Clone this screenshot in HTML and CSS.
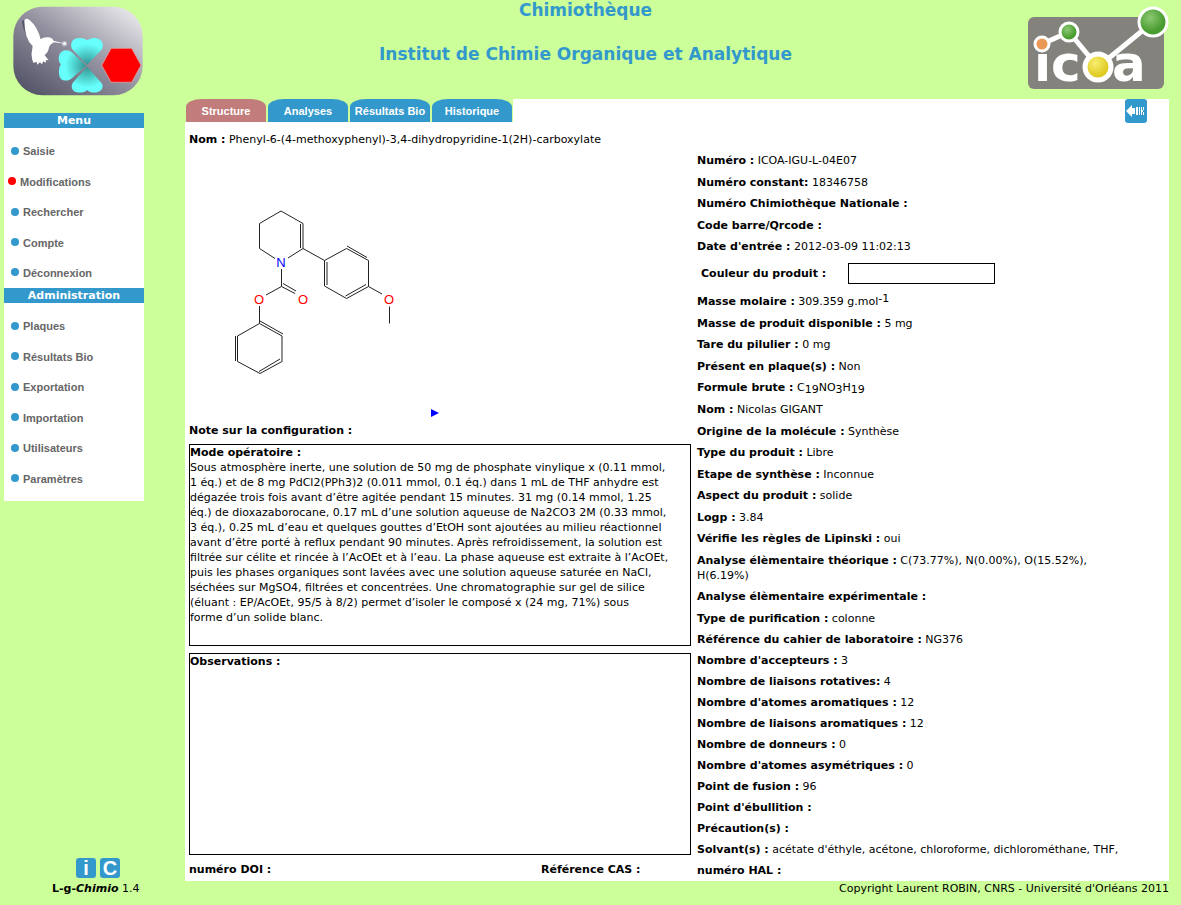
FILE: index.html
```html
<!DOCTYPE html>
<html lang="fr">
<head>
<meta charset="utf-8">
<title>Chimiothèque</title>
<link rel="stylesheet" href="styles.css">
</head>
<body>
<header class="header">
  <svg class="logo-app" viewBox="39 20 391 268" role="img" aria-label="L-g-Chimio">
    <defs>
      <linearGradient id="plate" x1="0" y1="1" x2="1" y2="0"><stop offset="0.1" stop-color="#58586c"/><stop offset="0.5" stop-color="#92909e"/><stop offset="1" stop-color="#f4f4f6"/></linearGradient>
      <radialGradient id="leaf" gradientUnits="userSpaceOnUse" cx="262" cy="198" r="66"><stop offset="0" stop-color="#2f8f8d"/><stop offset="1" stop-color="#66fffb"/></radialGradient>
    </defs>
    <rect x="40" y="21" width="389" height="266" rx="88" fill="url(#plate)"/>
    <path fill="#55556a" d="M66 66q4-10 12-4l30 56-4 12q-34-24-38-64z"/>
    <path fill="#fff" d="M73 62Q76 53 88 60Q114 82 122 119Q132 111 145 113Q157 114 161 123L196 132L162 128Q150 134 147 144Q145 158 134 166L146 182L138 181L138 189L130 185L126 194L120 188L112 195L110 186L101 190L97 181Q92 164 97 147L98 139Q74 118 73 62z"/>
    <circle cx="194" cy="132" r="8" fill="#fff" opacity=".4"/><circle cx="194" cy="132" r="4" fill="#fff"/>
    <g fill="url(#leaf)">
      <path d="M262 195L220 152C208 138 214 116 236 115C248 114 258 118 262 122C268 117 280 113 290 116C310 120 314 140 304 152z"/>
      <path d="M262 201L220 248C210 262 218 278 236 279C248 280 258 276 262 271C268 278 282 281 292 278C310 274 313 258 303 248z"/>
      <path d="M259 198L216 158C204 148 186 150 180 162C174 174 176 186 183 194C175 206 175 230 184 239C194 246 208 243 216 236z"/>
    </g>
    <path fill="#f00" stroke="#dcb5b5" stroke-width="2" d="M334 146h62l28 51-28 51h-62l-28-51z"/>
  </svg>
  <div class="titles"><h1>Chimiothèque</h1><h1>Institut de Chimie Organique et Analytique</h1></div>
  <svg class="logo-lab" viewBox="1027 5 142 85" role="img" aria-label="ICOA">
    <defs>
      <radialGradient id="green" cx=".4" cy=".35"><stop offset="0" stop-color="#8cc873"/><stop offset="1" stop-color="#489c30"/></radialGradient>
      <radialGradient id="yellow" cx=".4" cy=".35"><stop offset="0" stop-color="#f8ee70"/><stop offset="1" stop-color="#dfca20"/></radialGradient>
    </defs>
    <rect x="1028" y="17" width="136" height="72" rx="6" fill="#84827d"/>
    <text class="lab-name" x="1034 1051" y="81">ic</text>
    <text class="lab-name" x="1112" y="81">a</text>
    <path d="M1042 44l27-12 29 35 55-45" fill="none" stroke="#fff" stroke-width="5"/>
    <g stroke="#fff" stroke-width="3">
      <circle cx="1042" cy="44" r="7" fill="#e99855"/>
      <circle cx="1069" cy="32" r="9" fill="url(#green)"/>
      <circle cx="1098" cy="67" r="13" fill="url(#yellow)" stroke-width="5"/>
      <circle cx="1153" cy="22" r="14" fill="url(#green)"/>
    </g>
  </svg>
</header>
<div class="layout">
  <aside class="sidebar">
    <nav class="menu">
      <h2>Menu</h2>
      <ul>
        <li><a href="#">Saisie</a></li>
        <li class="current"><a href="#">Modifications</a></li>
        <li><a href="#">Rechercher</a></li>
        <li><a href="#">Compte</a></li>
        <li><a href="#">Déconnexion</a></li>
      </ul>
      <h2>Administration</h2>
      <ul class="admin">
        <li><a href="#">Plaques</a></li>
        <li><a href="#">Résultats Bio</a></li>
        <li><a href="#">Exportation</a></li>
        <li><a href="#">Importation</a></li>
        <li><a href="#">Utilisateurs</a></li>
        <li><a href="#">Paramètres</a></li>
      </ul>
    </nav>
    <div class="about"><a href="#">i</a><a href="#">C</a></div>
  </aside>
  <main class="main">
    <div class="topbar">
      <nav class="tabs">
        <a class="active" href="#">Structure</a><a href="#">Analyses</a><a href="#">Résultats Bio</a><a href="#">Historique</a>
      </nav>
      <a class="back" href="#" aria-label="Retour"><svg viewBox="0 0 22 24"><path fill="#fff" d="M1 12l6-6v3h3v6H7v3zM11 8h2v8h-2zM14 8h1v8h-1zM16 8h1v8h-1zM18 8h1v3h-1zM18 13h1v3h-1zM17 11h1v2h-1z"/></svg></a>
    </div>
    <p class="name"><b>Nom :</b> Phenyl-6-(4-methoxyphenyl)-3,4-dihydropyridine-1(2H)-carboxylate</p>
    <div class="columns">
      <section class="left">
        <svg class="molecule" viewBox="189 150 240 253" role="img" aria-label="Structure de la molécule">
          <g fill="none" stroke="#222" stroke-width="1">
            <path d="M275 258.500L259.500 248.500V223.500L281 211L303 223.500V248.500L288 258M300.500 224V248M303 248.500L324.500 260.500M281.500 269V286.500L266 295M281.500 286.500L295 293.500M283 283.500L296 291M259.500 306V323.500"/>
            <path d="M324.500 260.500L346.500 248.500L368.500 260.500V286.500L346.500 298.500L324.500 286V260.500M347 246L367 257.500M327 262V285M366 284.500L345.500 296M368.500 286.500L382 294M389.500 306.500V323.500"/>
            <path d="M259.500 323.500L282 336V361.500L260 373.500L237.500 361.500V336L259.500 323.500M260 321L283 334M235.500 336V361M280 359L259 371.500"/>
          </g>
          <text class="atom nitrogen" x="281" y="267">N</text>
          <text class="atom" x="259" y="304">O</text>
          <text class="atom" x="303" y="304">O</text>
          <text class="atom" x="389" y="304">O</text>
        </svg>
        <a class="next" href="#" aria-label="Suivant"><svg viewBox="0 0 8 8"><path d="M0 0l8 4-8 4z" fill="#00f"/></svg></a>
        <p><b>Note sur la configuration :</b></p>
        <div class="box"><b>Mode opératoire :</b><br>Sous atmosphère inerte, une solution de 50 mg de phosphate vinylique x (0.11 mmol,<br>1 éq.) et de 8 mg PdCl2(PPh3)2 (0.011 mmol, 0.1 éq.) dans 1 mL de THF anhydre est<br>dégazée trois fois avant d’être agitée pendant 15 minutes. 31 mg (0.14 mmol, 1.25<br>éq.) de dioxazaborocane, 0.17 mL d’une solution aqueuse de Na2CO3 2M (0.33 mmol,<br>3 éq.), 0.25 mL d’eau et quelques gouttes d’EtOH sont ajoutées au milieu réactionnel<br>avant d’être porté à reflux pendant 90 minutes. Après refroidissement, la solution est<br>filtrée sur célite et rincée à l’AcOEt et à l’eau. La phase aqueuse est extraite à l’AcOEt,<br>puis les phases organiques sont lavées avec une solution aqueuse saturée en NaCl,<br>séchées sur MgSO4, filtrées et concentrées. Une chromatographie sur gel de silice<br>(éluant : EP/AcOEt, 95/5 à 8/2) permet d’isoler le composé x (24 mg, 71%) sous<br>forme d’un solide blanc.</div>
        <div class="box"><b>Observations :</b></div>
        <div class="refs"><b>numéro DOI :</b><b>Référence CAS :</b></div>
      </section>
      <section class="right">
        <p class="loose"><b>Numéro :</b> ICOA-IGU-L-04E07</p>
        <p><b>Numéro constant:</b> 18346758</p>
        <p class="loose"><b>Numéro Chimiothèque Nationale :</b></p>
        <p><b>Code barre/Qrcode :</b></p>
        <p><b>Date d'entrée :</b> 2012-03-09 11:02:13</p>
        <div class="color"><label for="color">Couleur du produit :</label><input id="color" type="text"></div>
        <p class="loose"><b>Masse molaire :</b> 309.359 g.mol<sup>-1</sup></p>
        <p><b>Masse de produit disponible :</b> 5 mg</p>
        <p class="loose"><b>Tare du pilulier :</b> 0 mg</p>
        <p><b>Présent en plaque(s) :</b> Non</p>
        <p class="loose"><b>Formule brute :</b> C<sub>19</sub>NO<sub>3</sub>H<sub>19</sub></p>
        <p class="loose"><b>Nom :</b> Nicolas GIGANT</p>
        <p><b>Origine de la molécule :</b> Synthèse</p>
        <p class="loose"><b>Type du produit :</b> Libre</p>
        <p><b>Etape de synthèse :</b> Inconnue</p>
        <p class="loose"><b>Aspect du produit :</b> solide</p>
        <p><b>Logp :</b> 3.84</p>
        <p class="loose"><b>Vérifie les règles de Lipinski :</b> oui</p>
        <p><b>Analyse élèmentaire théorique :</b> C(73.77%), N(0.00%), O(15.52%),<br>H(6.19%)</p>
        <p class="loose"><b>Analyse élèmentaire expérimentale :</b></p>
        <p><b>Type de purification :</b> colonne</p>
        <p><b>Référence du cahier de laboratoire :</b> NG376</p>
        <p><b>Nombre d'accepteurs :</b> 3</p>
        <p><b>Nombre de liaisons rotatives:</b> 4</p>
        <p><b>Nombre d'atomes aromatiques :</b> 12</p>
        <p><b>Nombre de liaisons aromatiques :</b> 12</p>
        <p><b>Nombre de donneurs :</b> 0</p>
        <p><b>Nombre d'atomes asymétriques :</b> 0</p>
        <p><b>Point de fusion :</b> 96</p>
        <p><b>Point d'ébullition :</b></p>
        <p><b>Précaution(s) :</b></p>
        <p><b>Solvant(s) :</b> acétate d'éthyle, acétone, chloroforme, dichlorométhane, THF,</p>
        <p><b>numéro HAL :</b></p>
      </section>
    </div>
  </main>
</div>
<footer class="footer"><span><b>L-g-<i>Chimio</i></b> 1.4</span><span>Copyright Laurent ROBIN, CNRS - Université d'Orléans 2011</span></footer>
</body>
</html>
```
FILE: styles.css
```css
* { box-sizing: border-box; }
body { margin: 0; background: #cf9; color: #000; font: 11px/15px Verdana, "DejaVu Sans", sans-serif; }
h1, h2, p, ul { margin: 0; padding: 0; }
a { text-decoration: none; }
svg { display: block; }

.header { display: flex; align-items: flex-start; height: 99px; padding-right: 12px; }
.logo-app { width: 130px; height: 90px; margin: 6px 1px 0 13px; }
.logo-lab { width: 142px; height: 85px; margin-top: 5px; }
.lab-name { font: bold 50px "DejaVu Sans", sans-serif; fill: #fff; }
.titles { flex: 1; display: grid; gap: 24px; text-align: center; }
h1 { font-size: 17px; line-height: 20px; color: #39c; }

.layout { display: grid; grid-template-columns: 140px 1fr; column-gap: 41px; padding: 0 12px 0 4px; }
.sidebar { display: flex; flex-direction: column; justify-content: space-between; padding-top: 14px; }
.menu { background: #fff; padding-bottom: 7px; }
.menu h2 { background: #39c; color: #fff; font-size: 11px; line-height: 15px; text-align: center; }
.menu ul { list-style: none; padding: 8px 0 0 7px; }
.menu li { display: flex; align-items: center; gap: 4px; height: 30px; }
.menu li:nth-child(odd) { height: 31px; }
.menu ul:not(.admin) li:last-child { height: 30px; }
.menu li::before { content: ""; width: 8px; height: 8px; margin-bottom: 2px; border-radius: 50%; background: #39c; }
.menu li.current { margin-left: -3px; }
.menu li.current::before { background: #f00; }
.menu li a { color: #666; font: bold 11px/15px "Liberation Sans", Arial, sans-serif; }
.about { display: flex; justify-content: flex-end; gap: 4px; padding: 0 24px 3px 0; }
.about a { width: 20px; height: 20px; border-radius: 3px; background: #39c; color: #fff; font: bold 20px/20px "Liberation Sans", Arial, sans-serif; text-align: center; }

.main { background: #fff; }
.topbar { display: flex; justify-content: space-between; height: 24px; padding-right: 22px; }
.tabs { display: flex; gap: 2px; height: 23px; padding: 0 1px; background: #cf9; }
.tabs a { width: 80px; border-radius: 16px 16px 0 0 / 8px 8px 0 0; background: #39c; color: #fff; font: bold 11px/24px "Liberation Sans", Arial, sans-serif; text-align: center; white-space: nowrap; }
.tabs a.active { background: #c27c7c; }
.back { width: 22px; height: 24px; border-radius: 3px; background: #39c; }
.name { padding: 9px 4px 3px; }
.columns { display: grid; grid-template-columns: 502fr 468fr; column-gap: 6px; padding: 0 4px; }
.left, .right { display: flex; flex-direction: column; }
.left { gap: 6px; }
.molecule { width: 240px; height: 253px; }
.atom { font: 13px "Liberation Sans", Arial, sans-serif; fill: #f00; text-anchor: middle; }
.atom.nitrogen { fill: #00f; }
.next { align-self: center; padding-right: 10px; }
.next svg { width: 8px; height: 8px; }
.box { min-height: 202px; margin-bottom: 1px; border: 1px solid #000; }
.refs { display: grid; grid-template-columns: 352fr 150fr; }
.right p { padding: 3px 0; }
.right p.loose { padding-bottom: 4px; }
.color { display: flex; align-items: center; gap: 22px; height: 32px; margin-bottom: 2px; padding-left: 4px; }
.color label { font-weight: bold; }
.color input { width: 147px; height: 21px; border: 1px solid #000; background: #fff; font: inherit; }
sup, sub { font-size: 11px; line-height: 0; }
sup { vertical-align: 3px; }
sub { vertical-align: -2px; }
.footer { display: flex; justify-content: space-between; padding: 0 12px 9px 52px; }
```
